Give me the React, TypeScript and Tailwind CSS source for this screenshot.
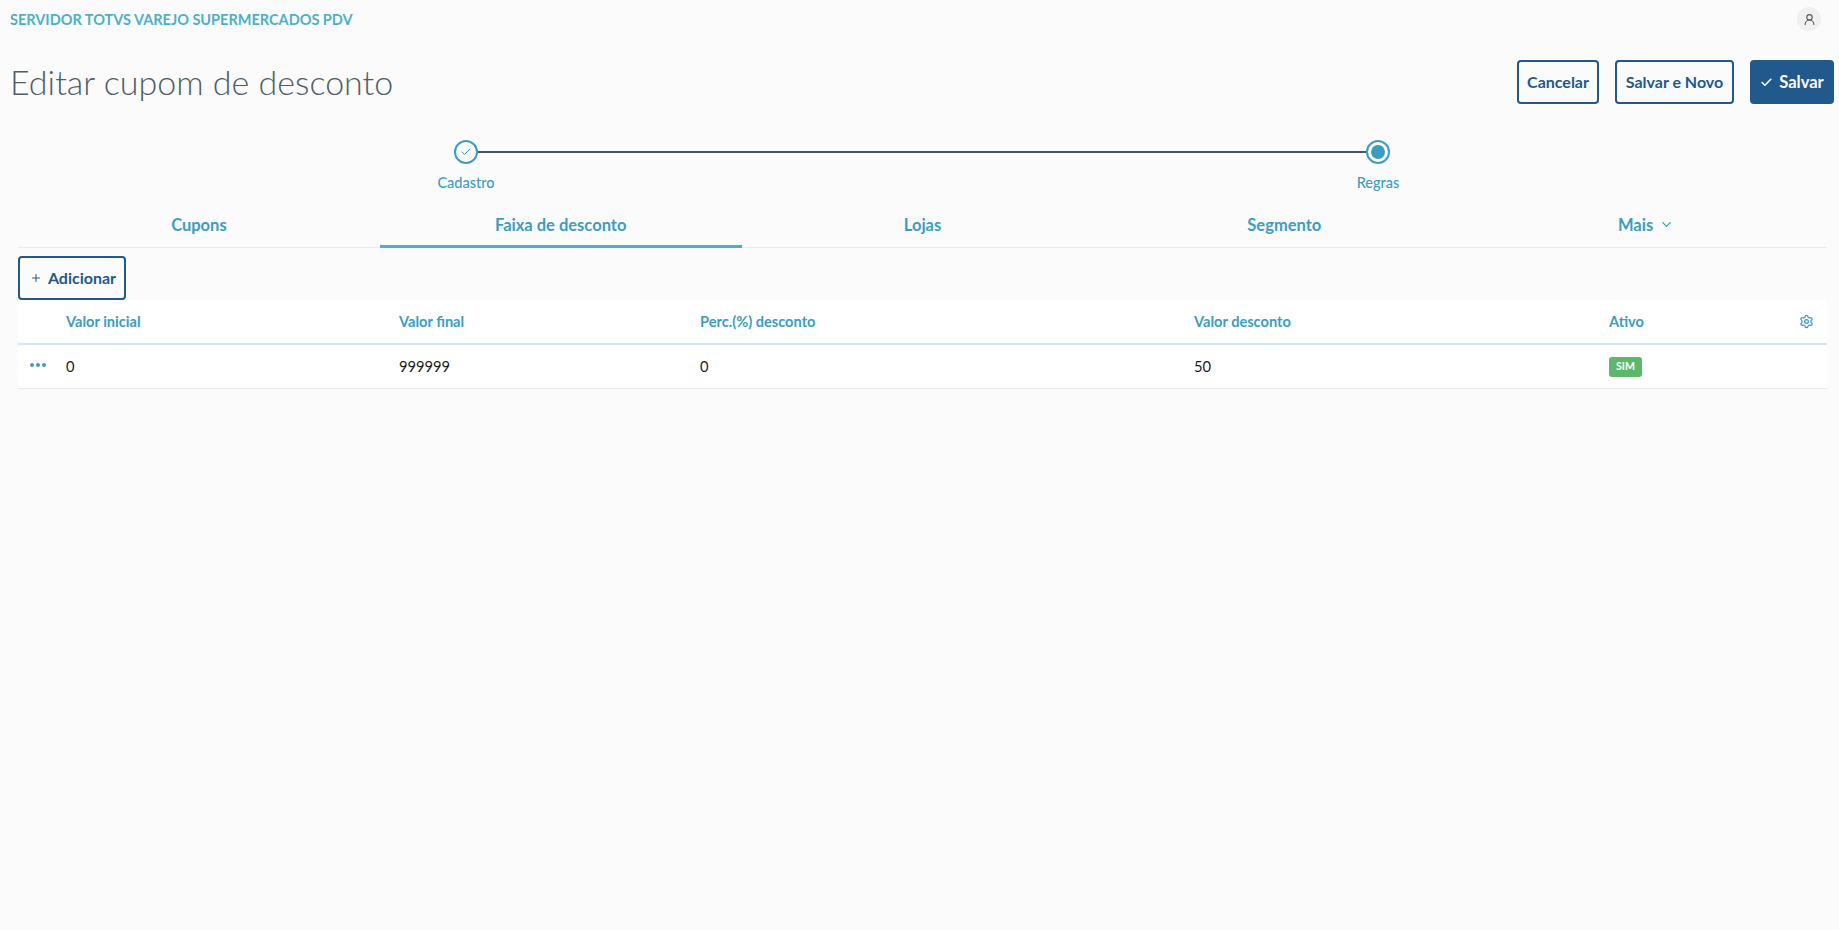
import { Check, ChevronDown, Plus, Settings, UserRound } from "lucide-react"

const font = { fontFamily: '"Lato", "Open Sans", sans-serif' }

const tabs = ["Cupons", "Faixa de desconto", "Lojas", "Segmento"]

const columns = [
  { label: "Valor inicial", value: "0", width: "w-[333px]" },
  { label: "Valor final", value: "999999", width: "w-[301px]" },
  { label: "Perc.(%) desconto", value: "0", width: "w-[494px]" },
  { label: "Valor desconto", value: "50", width: "w-[415px]" },
]

export default function App() {
  return (
    <div className="min-h-[930px] bg-[#fbfbfb]" style={font}>
      <header className="flex h-[38px] items-center justify-between pl-[10px] pr-[18px]">
        <span className="pt-[2px] text-[14.5px] font-bold text-[#4cb1c6]">SERVIDOR TOTVS VAREJO SUPERMERCADOS PDV</span>
        <span className="flex h-6 w-6 items-center justify-center rounded-full bg-[#f0f0f0]">
          <UserRound size={13} className="text-[#555]" />
        </span>
      </header>

      <div className="mt-[21px] flex h-[44px] items-center justify-between pl-[10px] pr-[5px]">
        <h1 className="text-[34px] font-light text-[#4f5d66]">Editar cupom de desconto</h1>
        <div className="mt-[2px] flex gap-4">
          <button className="h-[44px] w-[82px] rounded-[4px] border-2 border-[#22598c] text-[16px] font-bold text-[#22598c]">
            Cancelar
          </button>
          <button className="h-[44px] w-[119px] rounded-[4px] border-2 border-[#22598c] text-[16px] font-bold text-[#22598c]">
            Salvar e Novo
          </button>
          <button className="flex h-[44px] w-[84px] items-center justify-center gap-[6px] rounded-[4px] bg-[#22598c] text-[16.5px] font-bold text-white">
            <Check size={13} strokeWidth={3} />
            Salvar
          </button>
        </div>
      </div>

      <div className="mt-[37px] flex h-[64px] justify-center pl-[5px]">
        <div className="flex w-[936px] items-start">
          <div className="relative flex w-6 justify-center">
            <span className="flex h-6 w-6 items-center justify-center rounded-full border-2 border-[#3b9dc1]">
              <Check size={12} className="text-[#3b9dc1]" />
            </span>
            <span className="absolute top-[32px] text-[14.5px] font-medium text-[#3b9dc1]">Cadastro</span>
          </div>
          <div className="mt-[11px] h-[2px] flex-1 bg-[#46555f]" />
          <div className="relative flex w-6 justify-center">
            <span className="flex h-6 w-6 items-center justify-center rounded-full border-2 border-[#3b9dc1]">
              <span className="h-[14px] w-[14px] rounded-full bg-[#3b9dc1]" />
            </span>
            <span className="absolute top-[32px] text-[14.5px] font-medium text-[#3b9dc1]">Regras</span>
          </div>
        </div>
      </div>

      <div className="pl-[18px] pr-[12px]">
        <nav className="flex h-[44px] border-b border-[#ebebeb]">
          {tabs.map((tab, i) => (
            <div
              key={tab}
              className={`-mb-px flex flex-1 items-center justify-center border-b-[3px] pt-[2px] text-[16.5px] font-bold text-[#3b9dc1] ${
                i === 1 ? "border-[#4cb1c6]" : "border-transparent"
              }`}
            >
              {tab}
            </div>
          ))}
          <div className="-mb-px flex flex-1 items-center justify-center gap-[6px] border-b-[3px] border-transparent pt-[2px] text-[16.5px] font-bold text-[#3b9dc1]">
            Mais
            <ChevronDown size={15} className="mb-[3px]" />
          </div>
        </nav>

        <button className="mt-2 flex h-[44px] w-[108px] items-center justify-center gap-[6px] rounded-[4px] border-2 border-[#22598c] pl-[2px] text-[16px] font-bold text-[#22598c]">
          <Plus size={12} />
          Adicionar
        </button>

        <div className="bg-white">
          <div className="flex h-[45px] items-center border-b-2 border-[#d1e8f2] text-[14.6px] font-bold text-[#3b9dc1]">
            <div className="w-[48px]" />
            {columns.map((col) => (
              <div key={col.label} className={col.width}>
                {col.label}
              </div>
            ))}
            <div className="flex flex-1 items-center justify-between pr-[13px]">
              Ativo
              <Settings size={15} />
            </div>
          </div>
          <div className="flex h-[44px] items-center border-b border-[#ebebeb] text-[14.7px] text-[#1c1c1c]">
            <div className="flex w-[48px] gap-[2px] pb-1 pl-3">
              <span className="h-1 w-1 rounded-full bg-[#3b9dc1]" />
              <span className="h-1 w-1 rounded-full bg-[#3b9dc1]" />
              <span className="h-1 w-1 rounded-full bg-[#3b9dc1]" />
            </div>
            {columns.map((col) => (
              <div key={col.label} className={col.width}>
                {col.value}
              </div>
            ))}
            <div className="flex flex-1 items-center">
              <span className="inline-flex h-5 w-[33px] items-center justify-center rounded-[3px] bg-[#5cb86b] text-[10.5px] font-bold text-white">
                SIM
              </span>
            </div>
          </div>
        </div>
      </div>
    </div>
  )
}
